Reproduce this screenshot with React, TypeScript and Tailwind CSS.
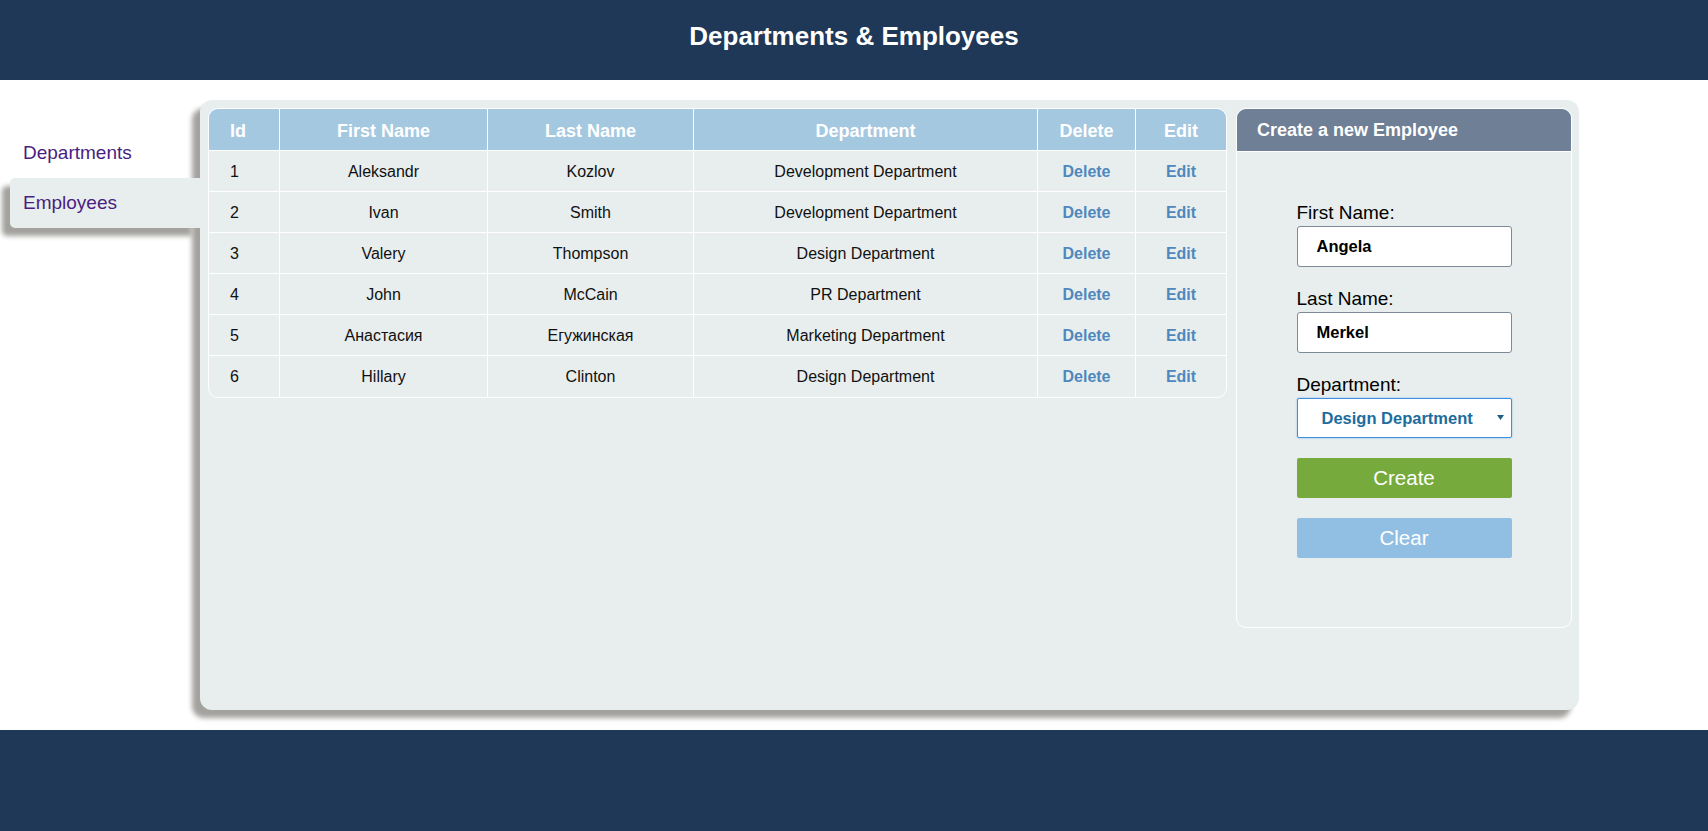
import React from 'react';

const employees = [
  { id: 1, first: 'Aleksandr', last: 'Kozlov', dept: 'Development Department' },
  { id: 2, first: 'Ivan', last: 'Smith', dept: 'Development Department' },
  { id: 3, first: 'Valery', last: 'Thompson', dept: 'Design Department' },
  { id: 4, first: 'John', last: 'McCain', dept: 'PR Department' },
  { id: 5, first: 'Анастасия', last: 'Егужинская', dept: 'Marketing Department' },
  { id: 6, first: 'Hillary', last: 'Clinton', dept: 'Design Department' },
];

function Sidebar() {
  return (
    <nav className="w-[200px] shrink-0 pt-[28px]">
      <div className="ml-[10px] h-[50px] pl-[13px] flex items-center text-[19px] text-[#4a1d80]">Departments</div>
      <div className="relative z-10 ml-[10px] h-[50px] pl-[13px] flex items-center text-[19px] text-[#4a1d80] bg-[#e8eeee] rounded-l-[5px] shadow-[-8px_8px_5px_#a3a29e]">
        Employees
      </div>
    </nav>
  );
}

function EmployeesTable() {
  const th = 'h-[42px] pt-[4px] border-b border-r border-white text-[18px] font-bold text-white text-center';
  const td = 'h-[41px] pt-[1px] border-r border-white text-[16px] text-[#111] text-center';
  return (
    <div className="w-[1019px] shrink-0 border border-white rounded-[10px] overflow-hidden">
      <table className="w-full table-fixed border-separate border-spacing-0">
        <thead className="bg-[#a5c8e1]">
          <tr>
            <th className={`${th} w-[71px] !text-left pl-[21px]`}>Id</th>
            <th className={`${th} w-[208px]`}>First Name</th>
            <th className={`${th} w-[206px]`}>Last Name</th>
            <th className={`${th} w-[344px]`}>Department</th>
            <th className={`${th} w-[98px]`}>Delete</th>
            <th className={`${th} w-[90px] !border-r-0`}>Edit</th>
          </tr>
        </thead>
        <tbody>
          {employees.map((e, i) => {
            const b = i < employees.length - 1 ? 'border-b' : '';
            return (
              <tr key={e.id}>
                <td className={`${td} ${b} !text-left pl-[21px]`}>{e.id}</td>
                <td className={`${td} ${b}`}>{e.first}</td>
                <td className={`${td} ${b}`}>{e.last}</td>
                <td className={`${td} ${b}`}>{e.dept}</td>
                <td className={`${td} ${b} font-bold !text-[#4f88bd]`}>Delete</td>
                <td className={`${td} ${b} !border-r-0 font-bold !text-[#4f88bd]`}>Edit</td>
              </tr>
            );
          })}
        </tbody>
      </table>
    </div>
  );
}

function CreateForm() {
  return (
    <div className="w-[336px] h-[520px] shrink-0 border border-white rounded-[10px] overflow-hidden">
      <div className="h-[43px] bg-[#6f7f96] border-b border-white pl-[20px] flex items-center text-[18px] font-bold text-white">
        Create a new Employee
      </div>
      <div className="pt-[50px] flex flex-col items-center">
        <div className="w-[215px] flex flex-col">
          <label className="text-[19px] leading-[22px] text-black mb-[2px]">First Name:</label>
          <input
            readOnly
            defaultValue="Angela"
            className="h-[41px] bg-white border border-[#7d8a98] rounded-[3px] pl-[19px] text-[16.5px] font-bold text-black outline-none"
          />
          <label className="mt-[21px] text-[19px] leading-[22px] text-black mb-[2px]">Last Name:</label>
          <input
            readOnly
            defaultValue="Merkel"
            className="h-[41px] bg-white border border-[#7d8a98] rounded-[3px] pl-[19px] text-[16.5px] font-bold text-black outline-none"
          />
          <label className="mt-[21px] text-[19px] leading-[22px] text-black mb-[2px]">Department:</label>
          <div className="relative h-[40px]">
            <select
              defaultValue="Design Department"
              className="appearance-none w-full h-full bg-white border border-[#3f8fe0] shadow-[0_0_2px_#7ab3ee] rounded-[2px] pl-[24px] text-[16.5px] font-bold text-[#1d6c9e] outline-none"
            >
              <option>Development Department</option>
              <option>Design Department</option>
              <option>PR Department</option>
              <option>Marketing Department</option>
            </select>
            <svg className="absolute right-[8px] top-[17px] pointer-events-none" width="7" height="5" viewBox="0 0 7 5">
              <path d="M0 0 L7 0 L3.5 5 Z" fill="#1d5f8a" />
            </svg>
          </div>
          <button className="mt-[20px] h-[40px] bg-[#76aa3d] rounded-[2px] text-[20.5px] text-white">Create</button>
          <button className="mt-[20px] h-[40px] bg-[#91bfe3] rounded-[2px] text-[20.5px] text-white">Clear</button>
        </div>
      </div>
    </div>
  );
}

export default function App() {
  return (
    <div className="min-h-screen bg-white font-['Liberation_Sans',Arial,sans-serif]">
      <header className="h-[80px] bg-[#203858] pt-[22px] text-center">
        <h1 className="text-[26px] leading-[28px] font-bold text-white">Departments &amp; Employees</h1>
      </header>
      <div className="flex py-[20px]">
        <Sidebar />
        <main className="w-[1379px] h-[610px] shrink-0 bg-[#e8eeee] rounded-[12px] shadow-[-8px_8px_5px_#a3a29e] pt-[8px] pl-[8px] pr-[7px] flex items-start gap-[9px]">
          <EmployeesTable />
          <CreateForm />
        </main>
      </div>
      <footer className="h-[101px] bg-[#203858]" />
    </div>
  );
}
